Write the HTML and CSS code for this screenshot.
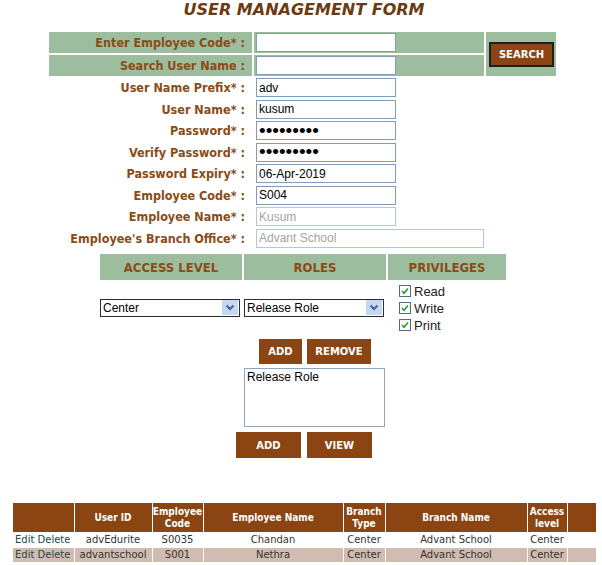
FILE: index.html
```html
<!DOCTYPE html>
<html>
<head>
<meta charset="utf-8">
<title>User Management Form</title>
<link rel="stylesheet" href="styles.css">
</head>
<body>
<h1 class="title">USER MANAGEMENT FORM</h1>

<table class="form">
  <colgroup><col class="c-lbl"><col class="c-fld"><col class="c-btn"></colgroup>
  <tr class="hl">
    <td class="lbl">Enter Employee Code* :</td>
    <td class="fld"><input class="txt" type="text"></td>
    <td class="btncell" rowspan="2"><button class="btn search">SEARCH</button></td>
  </tr>
  <tr class="hl">
    <td class="lbl">Search User Name :</td>
    <td class="fld"><input class="txt" type="text"></td>
  </tr>
  <tr>
    <td class="lbl">User Name Prefix* :</td>
    <td class="fld"><input class="txt" type="text" value="adv"></td><td></td>
  </tr>
  <tr>
    <td class="lbl">User Name* :</td>
    <td class="fld"><input class="txt" type="text" value="kusum"></td><td></td>
  </tr>
  <tr>
    <td class="lbl">Password* :</td>
    <td class="fld"><input class="txt pw" type="password" value="kusum1234"></td><td></td>
  </tr>
  <tr>
    <td class="lbl">Verify Password* :</td>
    <td class="fld"><input class="txt pw" type="password" value="kusum1234"></td><td></td>
  </tr>
  <tr>
    <td class="lbl">Password Expiry* :</td>
    <td class="fld"><input class="txt" type="text" value="06-Apr-2019"></td><td></td>
  </tr>
  <tr>
    <td class="lbl">Employee Code* :</td>
    <td class="fld"><input class="txt" type="text" value="S004"></td><td></td>
  </tr>
  <tr>
    <td class="lbl">Employee Name* :</td>
    <td class="fld"><input class="txt dis" type="text" value="Kusum" disabled></td><td></td>
  </tr>
  <tr>
    <td class="lbl">Employee's Branch Office* :</td>
    <td class="fld" colspan="2"><input class="txt dis wide" type="text" value="Advant School" disabled></td>
  </tr>
</table>

<table class="access">
  <colgroup><col class="a1"><col class="a2"><col class="a3"></colgroup>
  <tr class="ahead">
    <th>ACCESS LEVEL</th>
    <th>ROLES</th>
    <th>PRIVILEGES</th>
  </tr>
  <tr class="arow">
    <td>
      <div class="selwrap">
        <select class="sel"><option>Center</option></select>
        <span class="arrow"><svg width="16" height="15" viewBox="0 0 16 15"><path d="M4.5 5.5 L8 9 L11.5 5.5" fill="none" stroke="#4d6185" stroke-width="2"/></svg></span>
      </div>
    </td>
    <td>
      <div class="selwrap">
        <select class="sel"><option>Release Role</option></select>
        <span class="arrow"><svg width="16" height="15" viewBox="0 0 16 15"><path d="M4.5 5.5 L8 9 L11.5 5.5" fill="none" stroke="#4d6185" stroke-width="2"/></svg></span>
      </div>
    </td>
    <td class="privs">
      <label class="chk"><svg class="box" width="12" height="12" viewBox="0 0 12 12"><rect x="0.5" y="0.5" width="11" height="11" fill="#fff" stroke="#4f6a86"/><path d="M3 6 L5 8.2 L9 3.6" fill="none" stroke="#22a022" stroke-width="1.6"/></svg>Read</label>
      <label class="chk"><svg class="box" width="12" height="12" viewBox="0 0 12 12"><rect x="0.5" y="0.5" width="11" height="11" fill="#fff" stroke="#4f6a86"/><path d="M3 6 L5 8.2 L9 3.6" fill="none" stroke="#22a022" stroke-width="1.6"/></svg>Write</label>
      <label class="chk"><svg class="box" width="12" height="12" viewBox="0 0 12 12"><rect x="0.5" y="0.5" width="11" height="11" fill="#fff" stroke="#4f6a86"/><path d="M3 6 L5 8.2 L9 3.6" fill="none" stroke="#22a022" stroke-width="1.6"/></svg>Print</label>
    </td>
  </tr>
  <tr class="brow">
    <td></td>
    <td class="center"><button class="btn b-add">ADD</button><button class="btn b-remove">REMOVE</button></td>
    <td></td>
  </tr>
  <tr class="lrow">
    <td></td>
    <td><div class="listbox">Release Role</div></td>
    <td></td>
  </tr>
</table>

<div class="actions">
  <button class="btn b-wide">ADD</button>
  <button class="btn b-wide">VIEW</button>
</div>

<table class="grid">
  <colgroup>
    <col class="g1"><col class="g2"><col class="g3"><col class="g4"><col class="g5"><col class="g6"><col class="g7"><col class="g8">
  </colgroup>
  <tr class="ghead">
    <th></th>
    <th>User ID</th>
    <th>Employee<br>Code</th>
    <th>Employee Name</th>
    <th>Branch<br>Type</th>
    <th>Branch Name</th>
    <th>Access<br>level</th>
    <th></th>
  </tr>
  <tr class="grow">
    <td class="acts"><a class="lnk">Edit</a> <a class="lnk">Delete</a></td>
    <td>advEdurite</td>
    <td>S0035</td>
    <td>Chandan</td>
    <td>Center</td>
    <td>Advant School</td>
    <td>Center</td>
    <td></td>
  </tr>
  <tr class="grow alt">
    <td class="acts"><a class="lnk">Edit</a> <a class="lnk">Delete</a></td>
    <td>advantschool</td>
    <td>S001</td>
    <td>Nethra</td>
    <td>Center</td>
    <td>Advant School</td>
    <td>Center</td>
    <td></td>
  </tr>
</table>
</body>
</html>
```

FILE: styles.css
```css
html, body {
  margin: 0;
  padding: 0;
  background: #fff;
}
body {
  font-family: "DejaVu Sans", Verdana, sans-serif;
  width: 602px;
}

.title {
  margin: 0;
  font-family: "DejaVu Sans", Verdana, sans-serif;
  font-size: 16px;
  font-weight: bold;
  font-style: italic;
  line-height: 20px;
  height: 22px;
  color: #6b3a10;
  text-align: center;
  padding-left: 6px;
}

/* top form */
.form {
  border-collapse: separate;
  border-spacing: 2px;
  margin: 8px 0 0 47px;
  table-layout: fixed;
  width: 511px;
}
.c-lbl { width: 203px; }
.c-fld { width: 230px; }
.c-btn { width: 70px; }
.form td {
  padding: 0;
  height: 19.5px;
}
.form tr.hl td {
  background: #9dbe9e;
  height: 21px;
}
.lbl {
  text-align: right;
  padding-right: 7px !important;
  font-size: 12.5px;
  font-weight: bold;
  color: #8a4b17;
  white-space: nowrap;
  font-family: "DejaVu Sans Condensed", "DejaVu Sans", sans-serif;
}
.fld {
  padding-left: 2px !important;
  vertical-align: middle;
}
.txt {
  box-sizing: border-box;
  width: 140px;
  height: 19px;
  margin: 0;
  padding: 0 2px;
  border: 1px solid #7f9db9;
  font-family: "Liberation Sans", Arial, sans-serif;
  font-size: 12px;
  color: #000;
  background: #fff;
  display: block;
}
.txt.pw {
  font-size: 19px;
  line-height: 17px;
  padding-top: 0;
}
.txt.dis {
  color: #a3a3a3;
  border-color: #b5c6d6;
}
.txt.wide { width: 228px; }
.btncell {
  text-align: center;
  vertical-align: middle;
  padding-left: 1px !important;
}

.btn {
  background: #8b4513;
  color: #fff;
  font-family: "DejaVu Sans", Verdana, sans-serif;
  font-weight: bold;
  font-size: 10px;
  border: 0;
  margin: 0;
  padding: 0;
  height: 25px;
  cursor: pointer;
}
.search {
  width: 65px;
  border: 2px solid #1e1e1e;
}

/* access table */
.access {
  border-collapse: separate;
  border-spacing: 2px;
  margin: 2px 0 0 98px;
  table-layout: fixed;
  width: 410px;
}
.a1 { width: 142px; }
.a2 { width: 142px; }
.a3 { width: 118px; }
.access th, .access td { padding: 0; }
.ahead th {
  background: #9dbe9e;
  height: 26px;
  font-size: 13px;
  font-weight: bold;
  color: #8a4b17;
  text-align: center;
  font-family: "DejaVu Sans Condensed", "DejaVu Sans", sans-serif;
}
.arow td {
  height: 52px;
  vertical-align: middle;
}
.selwrap {
  position: relative;
  width: 140px;
  height: 18px;
}
.sel {
  appearance: none;
  -webkit-appearance: none;
  box-sizing: border-box;
  width: 140px;
  height: 18px;
  margin: 0;
  padding: 0 2px;
  border: 1px solid #2b2b2b;
  background: #fff;
  font-family: "Liberation Sans", Arial, sans-serif;
  font-size: 12px;
  color: #000;
  border-radius: 0;
  display: block;
}
.arrow {
  position: absolute;
  right: 2px;
  top: 1px;
  width: 16px;
  height: 15px;
  background: #c6d6f7;
  display: flex;
  pointer-events: none;
}
.privs {
  padding-left: 11px !important;
}
.chk {
  display: flex;
  align-items: center;
  gap: 3px;
  height: 17px;
  font-family: "Liberation Sans", Arial, sans-serif;
  font-size: 13px;
  color: #222;
}
.box { flex: none; }
.brow td {
  height: 30px;
  vertical-align: middle;
}
.center {
  text-align: center;
}
.b-add { width: 43px; margin-right: 5px; }
.b-remove { width: 64px; }
.lrow td { height: 59px; vertical-align: top; }
.listbox {
  box-sizing: border-box;
  width: 141px;
  height: 59px;
  border: 1px solid #8fa6bd;
  padding: 1px 2px;
  font-family: "Liberation Sans", Arial, sans-serif;
  font-size: 12px;
  color: #000;
}

.actions {
  display: flex;
  justify-content: center;
  gap: 6px;
  margin-top: 3px;
  padding-left: 6px;
}
.b-wide {
  width: 65px;
  height: 26px;
}

/* bottom grid */
.grid {
  border-collapse: collapse;
  table-layout: fixed;
  width: 583px;
  margin: 45px 0 0 13px;
}
.g1 { width: 61px; }
.g2 { width: 78px; }
.g3 { width: 51px; }
.g4 { width: 140px; }
.g5 { width: 42px; }
.g6 { width: 142px; }
.g7 { width: 40px; }
.g8 { width: 29px; }
.grid th, .grid td {
  border: 1px solid #fff;
  padding: 0;
}
.grid tr:first-child th { border-top: 0; }
.grid th:first-child, .grid td:first-child { border-left: 0; }
.grid th:last-child, .grid td:last-child { border-right: 0; }
.ghead th {
  background: #8b4513;
  color: #fff;
  font-size: 10px;
  font-weight: bold;
  line-height: 12px;
  height: 29px;
  text-align: center;
  font-family: "DejaVu Sans Condensed", "DejaVu Sans", sans-serif;
}
.grow td {
  height: 14px;
  font-size: 10px;
  line-height: 14px;
  color: #333;
  text-align: center;
  white-space: nowrap;
  overflow: hidden;
}
.grow.alt td {
  background: #d0bcb1;
}
.grow td.acts {
  text-align: left;
  padding-left: 2px;
}
.lnk {
  color: #274848;
  text-decoration: none;
}
```
